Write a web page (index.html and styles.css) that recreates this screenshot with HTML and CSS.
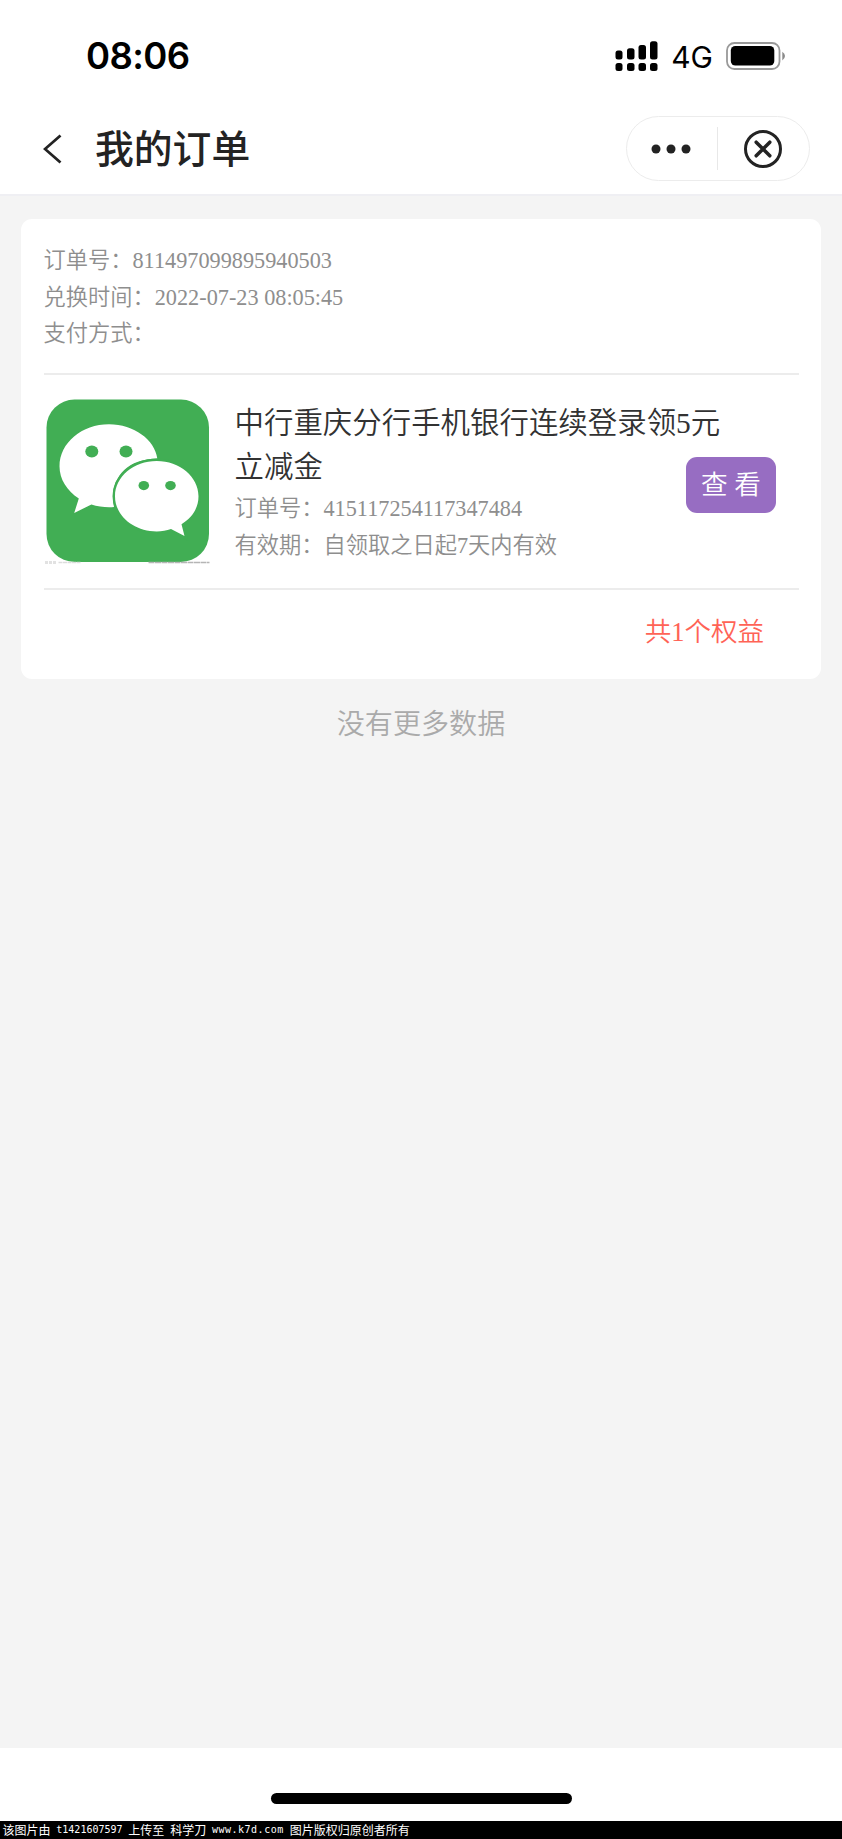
FILE: index.html
```
<!DOCTYPE html>
<html lang="zh-CN">
<head>
<meta charset="utf-8">
<title>我的订单</title>
<link rel="stylesheet" href="styles.css">
</head>
<body>
<div class="screen">
  <header class="header">
    <div class="status">
      <span class="time">08:06</span>
      <div class="indicators">
        <svg class="signal" width="44" height="31" viewBox="0 0 44 31">
          <rect x="0.5" y="9.5" width="7" height="9" rx="2.5"/>
          <rect x="12" y="7.3" width="7.5" height="11.2" rx="2.5"/>
          <rect x="23.5" y="4" width="7.5" height="14.5" rx="2.5"/>
          <rect x="35" y="0.3" width="7.5" height="18.2" rx="2.5"/>
          <rect x="0.5" y="22" width="7" height="8" rx="2.5"/>
          <rect x="12" y="22" width="7.5" height="8" rx="2.5"/>
          <rect x="23.5" y="22" width="7.5" height="8" rx="2.5"/>
          <rect x="35" y="22" width="7.5" height="8" rx="2.5"/>
        </svg>
        <span class="network">4G</span>
        <svg class="battery" width="60" height="28" viewBox="0 0 60 28">
          <rect x="1" y="1" width="52.5" height="26" rx="7.5" fill="none" stroke="#999" stroke-width="1.8"/>
          <rect x="4.800" y="4" width="43.500" height="19.5" rx="4.5"/>
          <path d="M56.3 9.8Q59 11.5 59 14T56.3 18.600z" fill="#8a8a8a"/>
        </svg>
      </div>
    </div>
    <nav class="nav">
      <svg class="back" width="20" height="32" viewBox="0 0 20 32">
        <path d="M17.500 2.500 2 16l15.500 13.500" fill="none" stroke="#232323" stroke-width="2.800"/>
      </svg>
      <h1 class="nav-title">我的订单</h1>
      <div class="capsule">
        <svg class="more" width="40" height="10" viewBox="0 0 40 10">
          <circle cx="5" cy="5" r="4.500"/><circle cx="20" cy="5" r="4.500"/><circle cx="35" cy="5" r="4.500"/>
        </svg>
        <span class="capsule-line"></span>
        <svg class="close" width="38" height="38" viewBox="0 0 38 38">
          <circle cx="19" cy="19" r="17.500"/>
          <path d="M12.200 12.200 25.800 25.800M25.800 12.200 12.200 25.800"/>
        </svg>
      </div>
    </nav>
  </header>
  <main class="content">
    <section class="card">
      <div class="order-info">
        <p>订单号：811497099895940503</p>
        <p>兑换时间：2022-07-23 08:05:45</p>
        <p>支付方式：</p>
      </div>
      <div class="item">
        <svg class="logo" width="168" height="168" viewBox="0 0 168 168">
          <rect x="2.500" y="2.500" width="162.500" height="162.500" rx="28" fill="#41ae54"/>
          <path fill="#fff" d="M65 27.300c-27 0-49.500 18.500-49.500 42 0 13 7.500 24.500 19.300 32.300L30.200 116l17.200-8.500c7 2.200 15.800 3.100 22.600 2.400C65 84 80 62 113.300 61.500C111 43 90 27.300 65 27.300z"/>
          <path fill="#fff" stroke="#41ae54" stroke-width="5" paint-order="stroke" d="M112.700 64c-23 0-41.700 15.700-41.700 35.200s18.700 35.200 41.700 35.200c5 0 10-.8 14.300-2.400l13.500 7.100-3-11.900c10.800-6.500 17-16.500 17-28 0-19.500-18.800-35.200-41.800-35.200z"/>
          <g fill="#41ae54">
            <ellipse cx="47.800" cy="54.500" rx="6.500" ry="6"/><ellipse cx="82" cy="54.500" rx="6.500" ry="6"/>
            <ellipse cx="99.800" cy="88.600" rx="5.300" ry="4.600"/><ellipse cx="126.500" cy="88.600" rx="5.300" ry="4.600"/>
          </g>
          <g stroke-width="1.500">
            <path d="M1 165.500h11" stroke="#e2e2e2" stroke-width="3" stroke-dasharray="3 1"/>
            <path d="M14.500 165.500h22" stroke="#ddd" stroke-dasharray="4 .5"/>
            <path d="M104.500 165.500h61" stroke="#b5b5b5" stroke-dasharray="6 .5"/>
          </g>
        </svg>
        <div class="item-text">
          <h2 class="item-title"><span>中行重庆分行手机银行连续登录领5元</span><span>立减金</span></h2>
          <p>订单号：415117254117347484</p>
          <p>有效期：自领取之日起7天内有效</p>
        </div>
        <button class="view" type="button">查 看</button>
      </div>
      <p class="total">共1个权益</p>
    </section>
    <p class="no-more">没有更多数据</p>
  </main>
  <footer class="home"><span class="home-bar"></span></footer>
  <div class="watermark">
    <span>该图片由</span><span class="latin">t1421607597</span><span>上传至</span><span>科学刀</span><span class="latin url">www.k7d.com</span><span>图片版权归原创者所有</span>
  </div>
</div>
</body>
</html>
```
FILE: styles.css
```
* { box-sizing: border-box; }
body, h1, h2, p { margin: 0; font-weight: 350; }
svg { display: block; flex: none; }
body { font-family: "Liberation Serif", "Noto Sans CJK SC", serif; background: #fff; }
.screen { width: 842px; height: 1839px; display: flex; flex-direction: column; overflow: hidden; }

.header { height: 196px; flex: none; border-bottom: 2px solid #efeff3; }
.status { height: 112px; padding: 0 56px 0 86px; display: flex; justify-content: space-between; align-items: center; }
.time { font: 600 36.500px/40px Inter, sans-serif; letter-spacing: -.6px; }
.indicators { display: flex; align-items: center; }
.network { font: 400 30px/36px Inter, sans-serif; margin: 1px 13px 0 12px; }

.nav { height: 73px; padding: 0 32px 0 43px; display: flex; align-items: center; }
.nav-title { margin: -6px 0 0 32px; font: 500 38.800px/56px "Noto Sans CJK SC", sans-serif; color: #232323; }
.capsule { margin-left: auto; width: 184px; height: 65px; border: 1px solid #ececec; border-radius: 33px; display: flex; align-items: center; padding: 0 27px 0 24px; justify-content: space-between; }
.capsule-line { width: 1px; height: 43px; background: #e8e8e8; }
.more { fill: #232323; }
.close { fill: none; stroke: #232323; stroke-width: 3; }
.close path { stroke-width: 3.500; stroke-linecap: round; }

.content { flex: 1; background: #f4f4f4; padding: 23px 21px 0; }
.card { height: 460px; background: #fff; border-radius: 11px; padding: 0 22px 0 22.500px; display: flex; flex-direction: column; }
.order-info { height: 156px; padding-top: 24px; border-bottom: 2px solid #ececec; font-size: 22.250px; line-height: 36.700px; color: #8e8e8e; }
.item { height: 215px; border-bottom: 2px solid #ececec; display: flex; padding: 22px 23px 0 0; }
.item-text { flex: none; width: 490px; margin-left: 23px; padding-top: 5px; font-size: 22.250px; line-height: 36.700px; color: #8e8e8e; }
.item-title { margin-bottom: 1.500px; font-size: 29.450px; line-height: 43.700px; color: #323232; }
.item-title span { display: block; }
/* The button overlaps the empty right end of the text column. */
.view { flex: none; width: 90px; height: 56px; margin: 60px 0 0 -38.500px; padding: 0; border: 0; border-radius: 11px; background: #976dc2; color: #fff; font: 350 26.600px/52px "Liberation Serif", "Noto Sans CJK SC", serif; }
.total { padding: 22px 35px 0 0; text-align: right; font-size: 26.500px; line-height: 40px; color: #ff6356; }
.no-more { margin-top: 25px; text-align: center; font-size: 28.100px; line-height: 42px; color: #aaa; }

.home { height: 73px; flex: none; display: flex; justify-content: center; padding-top: 45px; }
.home-bar { width: 301px; height: 11px; border-radius: 6px; background: #000; }
.watermark { height: 18px; flex: none; background: #000; color: #fff; display: flex; gap: 5.800px; padding-left: 2.500px; font: 12px/18px "Noto Sans CJK SC", sans-serif; white-space: nowrap; }
.latin { font: 10px/18px "DejaVu Sans Mono", monospace; }
.url { width: 72px; letter-spacing: .5px; }
```
